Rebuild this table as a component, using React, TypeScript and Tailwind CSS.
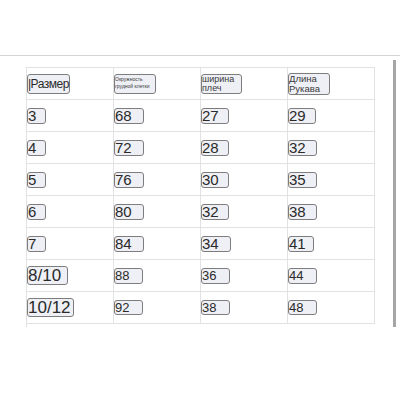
import React from 'react';

type Cell = { text: string; w: number; h?: number; size?: number };

const rows: Cell[][] = [
  [{ text: '3', w: 19 }, { text: '68', w: 30 }, { text: '27', w: 28 }, { text: '29', w: 28 }],
  [{ text: '4', w: 19 }, { text: '72', w: 30 }, { text: '28', w: 28 }, { text: '32', w: 29 }],
  [{ text: '5', w: 19 }, { text: '76', w: 30 }, { text: '30', w: 28 }, { text: '35', w: 29 }],
  [{ text: '6', w: 19 }, { text: '80', w: 30 }, { text: '32', w: 28 }, { text: '38', w: 29 }],
  [{ text: '7', w: 19 }, { text: '84', w: 30 }, { text: '34', w: 30 }, { text: '41', w: 26 }],
  [{ text: '8/10', w: 41, h: 19, size: 17 }, { text: '88', w: 29, size: 13 }, { text: '36', w: 29, size: 13 }, { text: '44', w: 29, size: 13 }],
  [{ text: '10/12', w: 47, h: 19, size: 17 }, { text: '92', w: 29, h: 15, size: 13 }, { text: '38', w: 29, h: 15, size: 13 }, { text: '48', w: 29, h: 15, size: 13 }],
];

const Chip: React.FC<{ w: number; h?: number; size?: number; children: React.ReactNode }> = ({ w, h = 16, size = 15, children }) => (
  <div
    className="border border-[#7d7d7d] rounded-[3px] bg-[#eef0f5] text-[#2a2a2a] overflow-hidden whitespace-nowrap"
    style={{ width: w, height: h, fontSize: size, lineHeight: `${h - 2}px` }}
  >
    {children}
  </div>
);

export default function App() {
  return (
    <div className="w-[400px] h-[400px] bg-white font-['Liberation_Sans',Arial,sans-serif] overflow-hidden">
      <div className="h-[55px]" />
      <div className="h-[1px] bg-[#d4d4d4]" />
      <div className="flex">
        <div className="w-[26px]" />
        <div className="mt-[11px] border-l border-t border-[#e2e2e2]">
          {/* header */}
          <div className="flex">
            <div className="w-[87px] h-[32px] border-r border-b border-[#e2e2e2] flex items-center">
              <div className="w-[43px] h-[20px] border border-[#7d7d7d] rounded-[3px] bg-[#eef0f5] text-[#2a2a2a] text-[12px] leading-[18px] tracking-[-0.5px] whitespace-nowrap">
                |Размер
              </div>
            </div>
            <div className="w-[87px] h-[32px] border-r border-b border-[#e2e2e2] flex items-center">
              <div className="w-[42px] h-[20px] border border-[#7d7d7d] rounded-[3px] bg-[#eef0f5] text-[#3a3a3a] text-[5px] leading-[7px] pt-[1px] whitespace-nowrap overflow-hidden">
                Окружность<br />грудной клетки
              </div>
            </div>
            <div className="w-[87px] h-[32px] border-r border-b border-[#e2e2e2] flex items-center">
              <div className="w-[41px] h-[20px] border border-[#7d7d7d] rounded-[3px] bg-[#eef0f5] text-[#3a3a3a] text-[9px] leading-[9px] whitespace-nowrap overflow-hidden">
                ширина<br />плеч
              </div>
            </div>
            <div className="w-[87px] h-[32px] border-r border-b border-[#e2e2e2] flex items-center">
              <div className="w-[42px] h-[22px] border border-[#7d7d7d] rounded-[3px] bg-[#eef0f5] text-[#3a3a3a] text-[9.5px] leading-[10px] whitespace-nowrap overflow-hidden">
                Длина<br />Рукава
              </div>
            </div>
          </div>
          {rows.map((row, i) => (
            <div key={i} className="flex">
              {row.map((c, j) => (
                <div key={j} className="w-[87px] h-[32px] border-r border-b border-[#e2e2e2] flex items-center">
                  <Chip w={c.w} h={c.h} size={c.size}>{c.text}</Chip>
                </div>
              ))}
            </div>
          ))}
        </div>
        <div className="flex-1" />
        <div className="mt-[4px] w-[3px] h-[267px] bg-[#a6a6a6] mr-[4px]" />
      </div>
    </div>
  );
}
